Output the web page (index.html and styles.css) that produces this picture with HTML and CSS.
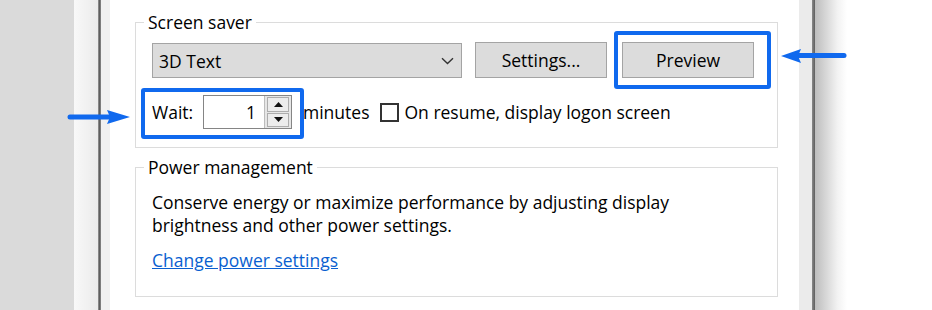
FILE: index.html
```html
<!DOCTYPE html>
<html lang="en">
<head>
    <meta charset="UTF-8">
    <title>Screen Saver Settings</title>
    <link rel="stylesheet" href="styles.css">
</head>

<body>
    <div class="screen">
        <div class="desk"></div>
        <div class="frame-shadow"></div>
        <div class="frame-line"></div>
        <div class="frame-edge"></div>

        <main class="dialog">
            <fieldset class="group group-saver">
                <legend>Screen saver</legend>
                <div class="group-body saver-body">
                    <div class="row row-saver">
                        <div class="combo">
                            <span class="combo-value">3D Text</span>
                            <svg class="chevron" width="13" height="8" viewBox="0 0 13 8">
                                <path d="M1 1.2 L6.5 6.5 L12 1.2" fill="none" stroke="#333" stroke-width="1.4"/>
                            </svg>
                        </div>
                        <button class="btn btn-settings">Settings...</button>
                        <button class="btn btn-preview">Preview<span class="mark mark-preview"></span></button>
                    </div>

                    <div class="row row-wait">
                        <span class="wait-label">Wait:</span>
                        <div class="spin">
                            <span class="spin-value">1</span>
                            <div class="spin-btns">
                                <span class="spin-btn">
                                    <svg width="9" height="5" viewBox="0 0 9 5"><polygon points="0,5 4.5,0 9,5" fill="#111"/></svg>
                                </span>
                                <span class="spin-btn">
                                    <svg width="9" height="5" viewBox="0 0 9 5"><polygon points="0,0 4.5,5 9,0" fill="#111"/></svg>
                                </span>
                            </div>
                        </div>
                        <span class="minutes">minutes</span>
                        <span class="check"></span>
                        <span class="check-label">On resume, display logon screen</span>
                        <span class="mark mark-wait"></span>
                    </div>
                </div>
            </fieldset>

            <fieldset class="group group-power">
                <legend>Power management</legend>
                <div class="group-body power-body">
                    <p class="power-text">Conserve energy or maximize performance by adjusting display brightness and other power settings.</p>
                    <a class="power-link" href="#">Change power settings</a>
                </div>
            </fieldset>
        </main>

        <div class="frame-edge-right"></div>
        <div class="frame-line-right"></div>
        <div class="frame-shadow-right"></div>
        <div class="outside"></div>
    </div>

    <svg class="arrow arrow-wait" width="66" height="18" viewBox="0 0 66 18">
        <line x1="4" y1="9" x2="44" y2="9" stroke="#1069ee" stroke-width="5" stroke-linecap="round"/>
        <polygon points="41,2 64,9 41,16 44,9" fill="#1069ee"/>
    </svg>
    <svg class="arrow arrow-preview" width="70" height="20" viewBox="0 0 70 20">
        <line x1="19" y1="9.5" x2="65" y2="9.5" stroke="#1069ee" stroke-width="5" stroke-linecap="round"/>
        <polygon points="22,3 2,10 22,17 19,10" fill="#1069ee"/>
    </svg>
</body>
</html>
```

FILE: styles.css
```css
* {
    box-sizing: border-box;
}

html,
body {
    margin: 0;
    height: 100%;
    overflow: hidden;
}

body {
    font-family: "Open Sans", "Noto Sans", sans-serif;
    font-size: 17.5px;
    color: #000;
    background: #fff;
    position: relative;
}

/* window frame around the dialog */
.screen {
    display: flex;
    height: 310px;
}

.desk {
    width: 74px;
    background: #dadada;
}

.frame-shadow {
    width: 24px;
    background: linear-gradient(to right, #f8f8f8, #ebebeb);
}

.frame-line {
    width: 3px;
    background: linear-gradient(to right, #9c9c9c, #5e5e5e, #8c8c8c);
}

.frame-edge {
    width: 9px;
    background: #f0f0f0;
}

.dialog {
    width: 689px;
    background: #fff;
    padding: 12px 21px 0 25px;
}

.frame-edge-right {
    width: 13px;
    background: #ebebeb;
}

.frame-line-right {
    width: 3px;
    background: linear-gradient(to right, #8a8a8a, #5e5e5e);
}

.frame-shadow-right {
    width: 32px;
    background: linear-gradient(to right, #bdbdbd, #f2f2f2 70%, #fff);
}

.outside {
    flex: 1;
    background: #fff;
}

/* group boxes */
.group {
    margin: 0;
    padding: 0;
    min-width: 0;
    border: 1px solid #dcdcdc;
}

.group legend {
    margin-left: 8px;
    padding: 0 4px;
    line-height: 20px;
}

.group-body {
    padding-left: 16px;
}

.saver-body {
    padding-top: 10px;
    padding-bottom: 18px;
}

.group-power {
    margin-top: 9px;
}

.power-body {
    padding-top: 14px;
    padding-bottom: 24px;
}

.row {
    display: flex;
}

.row-saver {
    align-items: flex-start;
}

.combo {
    width: 310px;
    height: 35px;
    margin-top: 1px;
    padding: 0 7px 0 6px;
    display: flex;
    align-items: center;
    justify-content: space-between;
    background: #dcdcdc;
    border: 1px solid #a4a4a4;
}

.btn {
    position: relative;
    width: 132px;
    height: 36px;
    padding: 0;
    font: inherit;
    color: #000;
    background: #dcdcdc;
    border: 1px solid #a4a4a4;
}

.btn-settings {
    margin-left: 13px;
}

.btn-preview {
    margin-left: 15px;
}

/* blue annotation boxes */
.mark {
    position: absolute;
    border: 4px solid #1069ee;
    border-radius: 3px;
}

.mark-preview {
    left: -9px;
    top: -12px;
    width: 157px;
    height: 58px;
}

.row-wait {
    position: relative;
    margin-top: 17px;
    height: 34px;
    align-items: center;
}

.mark-wait {
    left: -11px;
    top: -7px;
    width: 163px;
    height: 51px;
}

.wait-label {
    width: 51px;
}

.spin {
    width: 89px;
    height: 34px;
    display: flex;
    border: 1px solid #858585;
    background: #fff;
}

.spin-value {
    flex: 1;
    text-align: right;
    padding-right: 8px;
    line-height: 32px;
}

.spin-btns {
    width: 27px;
    padding: 1px 2px;
    display: flex;
    flex-direction: column;
    gap: 1px;
    background: #e6e6e6;
    border-left: 1px solid #bdbdbd;
}

.spin-btn {
    flex: 1;
    display: flex;
    align-items: center;
    justify-content: center;
    background: #ececec;
    border: 1px solid #adadad;
}

.minutes {
    margin-left: 11px;
}

.check {
    width: 19px;
    height: 19px;
    margin-left: 10px;
    border: 2px solid #333;
    background: #fff;
}

.check-label {
    margin-left: 6px;
}

.power-text {
    margin: 0;
    max-width: 570px;
    line-height: 23px;
}

.power-link {
    display: inline-block;
    margin-top: 12px;
    line-height: 23px;
    color: #0a5fd0;
}

.arrow {
    position: absolute;
}

.arrow-wait {
    left: 66px;
    top: 108px;
}

.arrow-preview {
    left: 779px;
    top: 46px;
}
```
